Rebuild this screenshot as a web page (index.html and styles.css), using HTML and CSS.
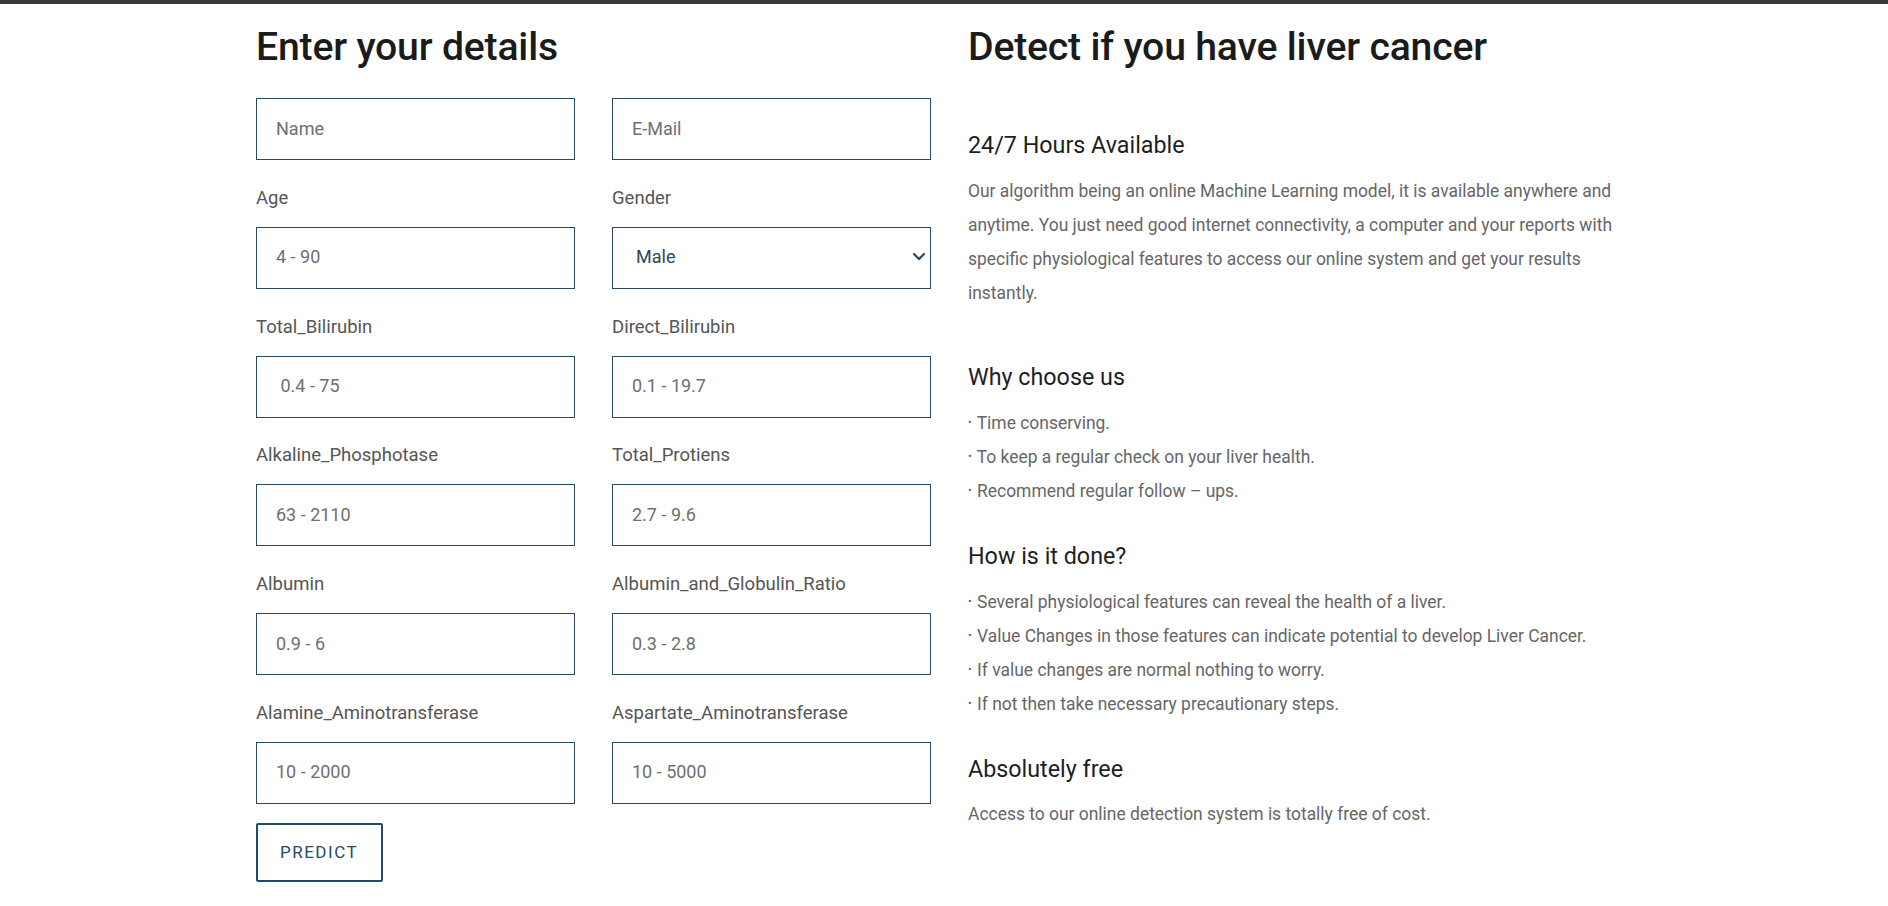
FILE: index.html
```html
<!DOCTYPE html>
<html lang="en">
<head>
<meta charset="utf-8">
<title>Liver Cancer Detection</title>
<link rel="stylesheet" href="styles.css">
</head>
<body>
<div class="topbar"></div>
<main class="page">
  <section class="form-col">
    <h2 class="title">Enter your details</h2>
    <form class="fields">
      <div class="field"><input class="box" type="text" placeholder="Name"></div>
      <div class="field"><input class="box" type="email" placeholder="E-Mail"></div>
      <div class="field"><label class="lbl">Age</label><input class="box" type="text" placeholder="4 - 90"></div>
      <div class="field"><label class="lbl">Gender</label>
        <div class="select-wrap">
          <select class="box select"><option>Male</option><option>Female</option></select>
          <svg class="chev" width="14" height="9" viewBox="0 0 14 9"><path d="M2 2 L7 7 L12 2" fill="none" stroke="#2c4a5e" stroke-width="2.2" stroke-linecap="round" stroke-linejoin="round"/></svg>
        </div>
      </div>
      <div class="field"><label class="lbl">Total_Bilirubin</label><input class="box" type="text" placeholder=" 0.4 - 75"></div>
      <div class="field"><label class="lbl">Direct_Bilirubin</label><input class="box" type="text" placeholder="0.1 - 19.7"></div>
      <div class="field"><label class="lbl">Alkaline_Phosphotase</label><input class="box" type="text" placeholder="63 - 2110"></div>
      <div class="field"><label class="lbl">Total_Protiens</label><input class="box" type="text" placeholder="2.7 - 9.6"></div>
      <div class="field"><label class="lbl">Albumin</label><input class="box" type="text" placeholder="0.9 - 6"></div>
      <div class="field"><label class="lbl">Albumin_and_Globulin_Ratio</label><input class="box" type="text" placeholder="0.3 - 2.8"></div>
      <div class="field"><label class="lbl">Alamine_Aminotransferase</label><input class="box" type="text" placeholder="10 - 2000"></div>
      <div class="field"><label class="lbl">Aspartate_Aminotransferase</label><input class="box" type="text" placeholder="10 - 5000"></div>
    </form>
    <button class="predict" type="button">PREDICT</button>
  </section>
  <section class="info-col">
    <h2 class="title">Detect if you have liver cancer</h2>
    <div class="block first">
      <h4 class="sub">24/7 Hours Available</h4>
      <p class="txt">Our algorithm being an online Machine Learning model, it is available anywhere and anytime. You just need good internet connectivity, a computer and your reports with specific physiological features to access our online system and get your results instantly.</p>
    </div>
    <div class="block">
      <h4 class="sub">Why choose us</h4>
      <p class="txt"><span class="dot">•</span> Time conserving.<br><span class="dot">•</span> To keep a regular check on your liver health.<br><span class="dot">•</span> Recommend regular follow – ups.</p>
    </div>
    <div class="block">
      <h4 class="sub">How is it done?</h4>
      <p class="txt"><span class="dot">•</span> Several physiological features can reveal the health of a liver.<br><span class="dot">•</span> Value Changes in those features can indicate potential to develop Liver Cancer.<br><span class="dot">•</span> If value changes are normal nothing to worry.<br><span class="dot">•</span> If not then take necessary precautionary steps.</p>
    </div>
    <div class="block last">
      <h4 class="sub">Absolutely free</h4>
      <p class="txt">Access to our online detection system is totally free of cost.</p>
    </div>
  </section>
</main>
</body>
</html>
```

FILE: styles.css
```css
* { box-sizing: border-box; }
html, body { margin: 0; padding: 0; background: #fff; }
body { font-family: Roboto, "Liberation Sans", sans-serif; color: #222; }

.topbar { height: 4px; background: #383838; }

.page {
  display: flex;
  gap: 37px;
  padding: 20px 0 0 256px;
}

.form-col { width: 675px; flex: none; }
.info-col { width: 680px; flex: none; display: flex; flex-direction: column; }

.title {
  margin: 0;
  font-size: 39.2px;
  line-height: 46px;
  font-weight: 500;
  color: #1b1b1b;
  letter-spacing: -0.2px;
}

.fields {
  margin-top: 28px;
  display: grid;
  grid-template-columns: 319px 319px;
  column-gap: 37px;
  row-gap: 24.8px;
}

.field { display: flex; flex-direction: column; }

.lbl {
  font-size: 18.5px;
  line-height: 27px;
  color: #555;
  margin-bottom: 15px;
}

.box {
  width: 100%;
  height: 62px;
  border: 1.5px solid #2c4a5e;
  border-radius: 0;
  background: #fff;
  padding: 0 19px 2px;
  font-family: Roboto, "Liberation Sans", sans-serif;
  font-size: 18px;
  color: #444;
  outline: none;
}
.box::placeholder { color: #6f6f6f; opacity: 1; }

.select-wrap { position: relative; }
.select {
  appearance: none;
  -webkit-appearance: none;
  padding-left: 23px;
  color: #2f4656;
}
.chev { position: absolute; right: 5px; top: 25px; pointer-events: none; }

.predict {
  margin-top: 19px;
  width: 127px;
  height: 59px;
  border: 2.5px solid #1f4b6e;
  border-radius: 2px;
  background: #fff;
  padding: 0 0 0 22px;
  text-align: left;
  font-family: Roboto, "Liberation Sans", sans-serif;
  font-size: 17px;
  letter-spacing: 1.5px;
  color: #234a68;
}

.block { margin-top: 34px; }
.block.first { margin-top: 61px; margin-bottom: 19px; }
.block.last .sub { margin-bottom: 13px; }

.sub {
  margin: 0 0 14px;
  font-size: 23.3px;
  line-height: 29px;
  font-weight: 400;
  color: #1e1e1e;
}

.txt {
  margin: 0;
  font-size: 17.45px;
  line-height: 34px;
  color: #666;
}

.dot { font-size: 11px; vertical-align: 3px; margin-right: 1px; }
```
